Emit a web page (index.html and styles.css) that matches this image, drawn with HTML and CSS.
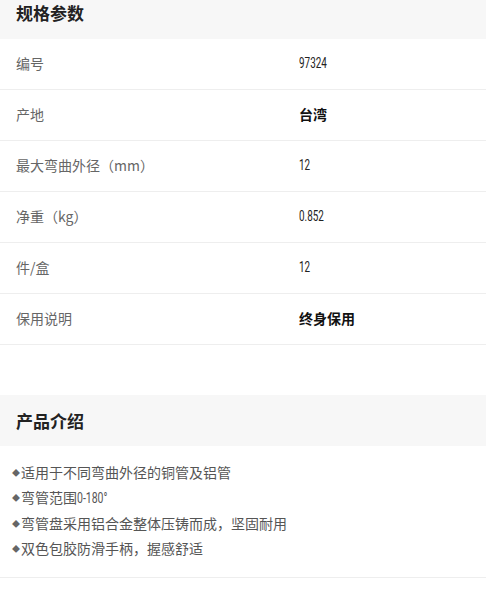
FILE: index.html
```html
<!DOCTYPE html>
<html lang="zh">
<head>
<meta charset="utf-8">
<link rel="stylesheet" href="styles.css">
</head>
<body>
<div class="page">
  <div class="sec-head top"><h2>规格参数</h2></div>
  <div class="spec">
    <div class="row"><span class="label">编号</span><span class="val"><span class="num">97324</span></span></div>
    <div class="row"><span class="label">产地</span><span class="val strong">台湾</span></div>
    <div class="row"><span class="label">最大弯曲外径（mm）</span><span class="val"><span class="num">12</span></span></div>
    <div class="row"><span class="label">净重（kg）</span><span class="val"><span class="num">0.852</span></span></div>
    <div class="row"><span class="label">件/盒</span><span class="val"><span class="num">12</span></span></div>
    <div class="row"><span class="label">保用说明</span><span class="val strong">终身保用</span></div>
  </div>
  <div class="spacer"></div>
  <div class="sec-head"><h2>产品介绍</h2></div>
  <ul class="intro">
    <li><span class="dot">◆</span>适用于不同弯曲外径的铜管及铝管</li>
    <li><span class="dot">◆</span>弯管范围<span class="lnum">0-180°</span></li>
    <li><span class="dot">◆</span>弯管盘采用铝合金整体压铸而成，坚固耐用</li>
    <li><span class="dot">◆</span>双色包胶防滑手柄，握感舒适</li>
  </ul>
</div>
</body>
</html>
```
FILE: styles.css
```css
html, body {
  margin: 0;
  padding: 0;
  background: #fff;
}
body {
  font-family: "Noto Sans CJK SC", "Noto Sans", sans-serif;
  color: #333;
}
.page {
  width: 486px;
}
.sec-head {
  background: #f7f7f7;
  height: 51px;
  display: flex;
  align-items: center;
  padding-left: 16px;
}
.sec-head.top {
  height: 39px;
  align-items: flex-start;
}
.sec-head h2 {
  margin: 0;
  font-size: 17px;
  font-weight: 700;
  color: #222;
  line-height: 26px;
}
.row {
  display: grid;
  grid-template-columns: 283px 1fr;
  height: 50px;
  align-items: center;
  padding-left: 16px;
  border-bottom: 1px solid #eeeeee;
}
.label {
  font-size: 14px;
  line-height: 20px;
  color: #666;
  margin-top: -2px;
}
.val {
  font-size: 13px;
  line-height: 20px;
  color: #222;
  margin-top: -2px;
}
.num {
  display: inline-block;
  font-family: Roboto, "Liberation Sans", sans-serif;
  font-size: 15px;
  transform: scaleX(0.66);
  transform-origin: left center;
  color: #222;
}
.val.strong {
  font-size: 14px;
  font-weight: 700;
  color: #111;
}
.spacer {
  height: 50px;
}
.intro {
  list-style: none;
  margin: 0;
  padding: 14px 0 16px 12px;
  border-bottom: 1px solid #eeeeee;
}
.intro li {
  font-size: 14px;
  line-height: 25px;
  color: #555;
}
.lnum {
  display: inline-block;
  font-family: Roboto, "Liberation Sans", sans-serif;
  font-size: 15px;
  transform: scaleX(0.7);
  transform-origin: left center;
}
.dot {
  font-size: 8px;
  color: #666;
  vertical-align: 2px;
  margin-right: 1px;
}
```
